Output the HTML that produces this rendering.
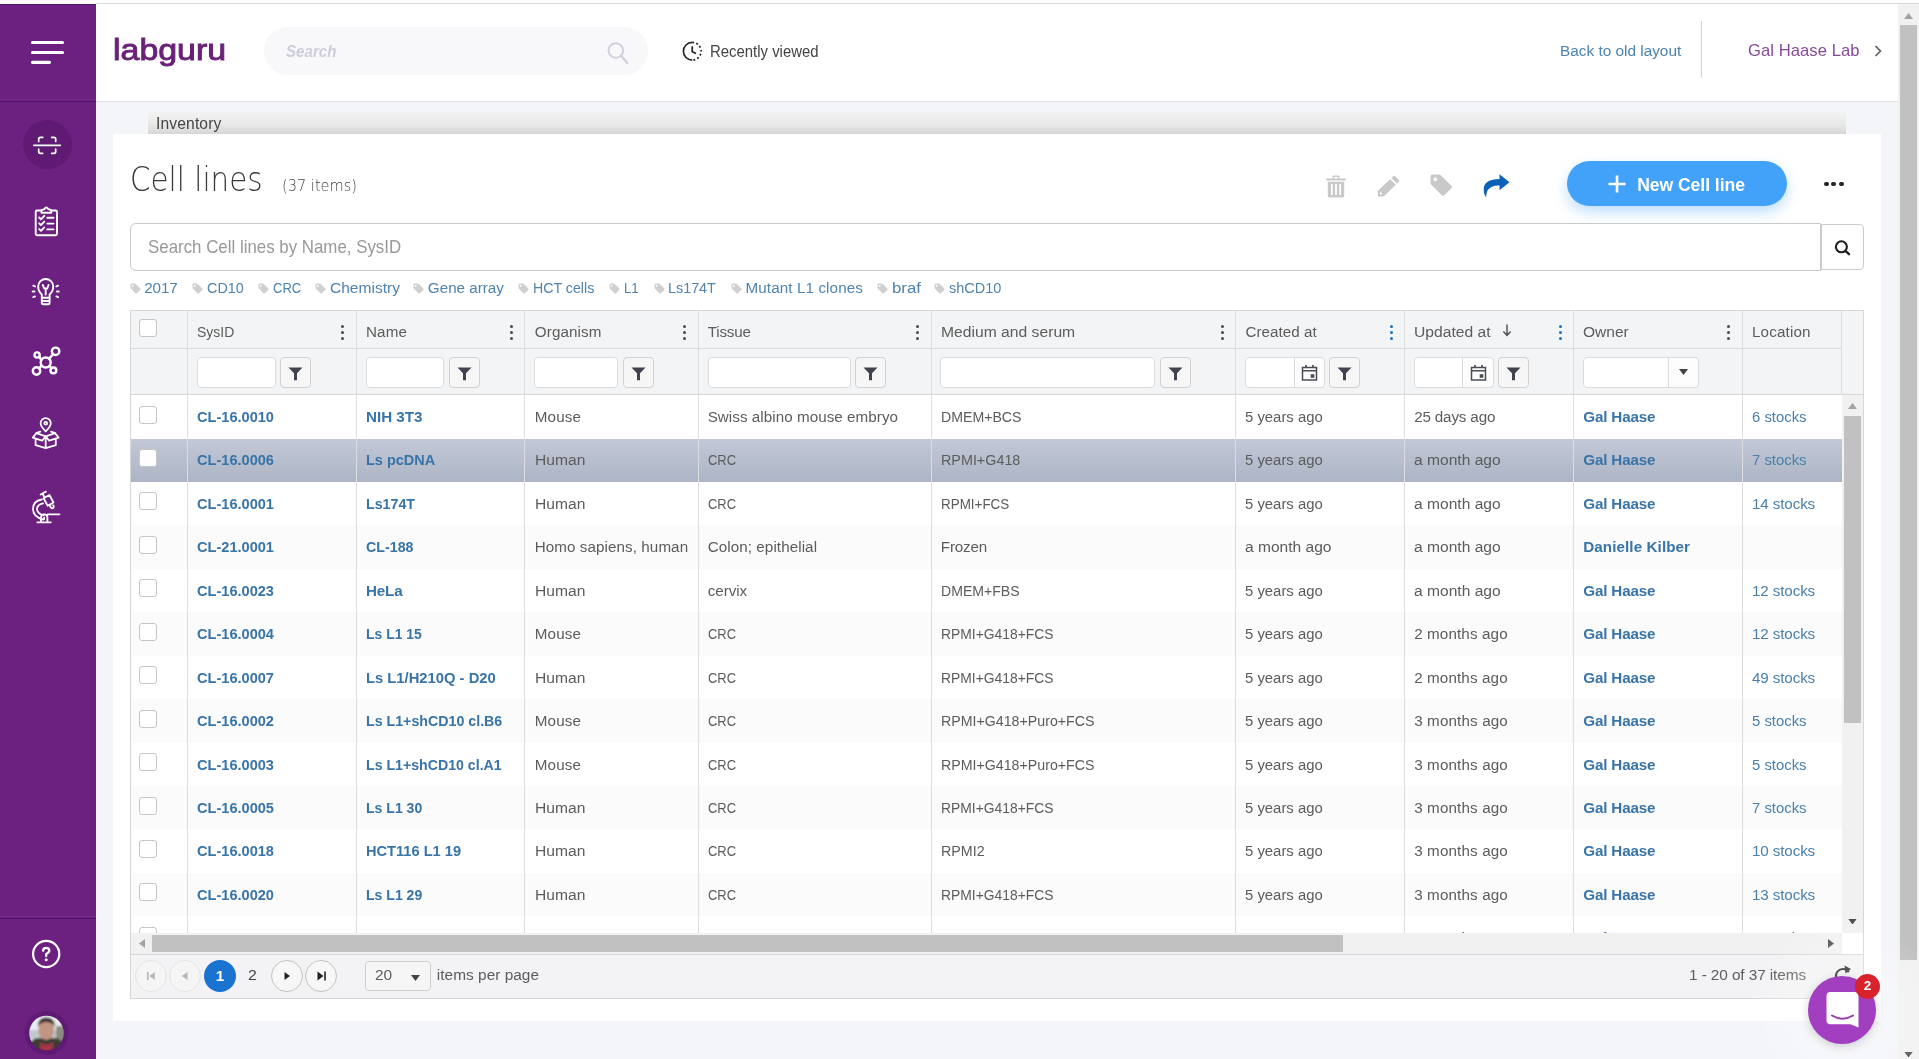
<!DOCTYPE html>
<html lang="en"><head><meta charset="utf-8"><title>Cell lines - Labguru</title>
<style>
*{box-sizing:border-box;margin:0;padding:0}
html,body{width:1919px;height:1059px;overflow:hidden}
body{position:relative;will-change:transform;background:#f4f5f9;font-family:"Liberation Sans","DejaVu Sans",sans-serif;font-size:15.2px;color:#555}
.abs{position:absolute}
.t{position:absolute;white-space:nowrap;transform-origin:0 50%;line-height:20px;font-size:15.2px;color:#5c5c5c}
.c44{color:#444}.c99{color:#999}.cw{color:#fff}.cblue{color:#4d83ad}.cpur{color:#87499a}
#topstrip{position:absolute;left:0;top:0;width:1919px;height:4px;background:linear-gradient(90deg,#fff 96px,#d8d8d8 96px) 0 3px/100% 1px no-repeat #fff}
#side{position:absolute;left:0;top:4px;width:96px;height:1055px;background:#6c2180;border-top:1px solid #571769}
#side .sep1{position:absolute;left:0;top:93px;width:96px;height:4px;background:linear-gradient(#6c2180 0,#722786 1.5px,#6a2080 3px,#501264 3px,#501264 4px)}
#side .sep2{position:absolute;left:0;top:910px;width:96px;height:4px;background:linear-gradient(#6c2180 0,#722786 1.5px,#6a2080 3px,#501264 3px,#501264 4px)}
#hdr{position:absolute;left:96px;top:4px;width:1802px;height:98px;background:#fff;border-bottom:1px solid #e1e2e6}
.logo{color:#6a2179;-webkit-text-stroke:0.9px #6a2179}
#gsearch{position:absolute;left:168px;top:22.500px;width:384px;height:48.500px;border-radius:25px;background:#f8f8fb}
.gs{color:#cdced9}
#hdiv{position:absolute;left:1605px;top:17px;width:1px;height:57px;background:#d4d4d4}
#pscroll{position:absolute;left:1898px;top:4px;width:21px;height:1055px;background:#f1f1f1}
#pscroll .th{position:absolute;left:2px;top:21px;width:17px;height:935px;background:#c1c1c1}
#crumb{position:absolute;left:148px;top:112px;width:1698px;height:22px;background:linear-gradient(#f3f3f3,#e9e9e9 55%,#d6d6d6);}
#card{position:absolute;left:113px;top:134px;width:1768px;height:887px;background:#fff}
.ttl{color:#3a3a3a;font-family:"DejaVu Sans","Liberation Sans",sans-serif}.cnt{color:#444;font-family:"DejaVu Sans","Liberation Sans",sans-serif}
#newbtn{position:absolute;left:1567px;top:161px;width:220px;height:45px;border-radius:23px;background:#42a1f8;box-shadow:0 6px 14px rgba(66,161,248,.35)}
#dots{position:absolute;left:1824px;top:181.800px;white-space:nowrap;font-size:0}
#dots i{display:inline-block;width:4.600px;height:4.600px;border-radius:50%;background:#222;margin-right:2.900px;vertical-align:top}
#sin{position:absolute;left:130px;top:223px;width:1691px;height:48px;border:1px solid #c9c9c9;border-radius:6px 0 0 6px;background:#fff}
#sbtn{position:absolute;left:1821px;top:224px;width:43px;height:46px;border:1px solid #ccc;border-radius:0 4px 4px 0;background:#fff}
#tags{position:absolute;left:130px;top:277px;height:22px;color:#3c78a8}
#tags .t{color:#5083ad}
#tags svg{position:absolute;top:6px}
#grid{position:absolute;left:130px;top:310px;width:1734px;height:689px;border:1px solid #d7d7d7;background:#fff;overflow:hidden}
#ghead{position:absolute;left:0;top:0;width:1732px;height:84px;background:#f3f4f6;border-bottom:1px solid #d7d7d7}
#ghead .hline{position:absolute;left:0;top:37px;width:1710px;height:1px;background:#dbdbdb}
#ghead .cb{top:8px}
.hc{position:absolute;left:0;top:0;height:37px}
.sortarr{position:absolute;top:13px}
.kmenu{position:absolute;top:14.300px;width:4px}
.kmenu i{display:block;width:3px;height:3px;border-radius:50%;margin-bottom:2.9px}
.vsep{position:absolute;width:1px;background:#dddddd}
.fin{position:absolute;top:46px;height:30.500px;border:1px solid #dcdcdc;border-radius:4px;background:#fff}
.fsplit{position:absolute;top:-1px;height:30.500px;border:1px solid #dcdcdc;border-radius:0 4px 4px 0;background:#fdfdfd;display:flex;align-items:center;justify-content:center}
.fbtn{position:absolute;top:46px;height:30.500px;padding-top:1.500px;border:1px solid #d2d2d2;border-radius:4px;background:#f6f6f6;display:flex;align-items:center;justify-content:center}
#gbody{position:absolute;left:0;top:84px;width:1711px;height:538px;overflow:hidden;background:#fff}
.row{position:absolute;left:0;width:1711px;height:43.450px;background:#fff}
.row.alt{background:#fbfbfb}
.row.sel{background:linear-gradient(#fff 0.8px,#c2c8d6 0.8px,#adb4c5 100%)}
.c.lk{color:#3874a8}
.c.lk2{color:#4a80ab}
.cb{position:absolute;left:8px;top:10.500px;width:18px;height:18px;border:1px solid #c6c6c6;border-radius:3px;background:#fff}
#vscroll{position:absolute;left:1711px;top:84px;width:21px;height:538px;background:#f1f1f1}
#vscroll .th{position:absolute;left:2px;top:21px;width:17px;height:307px;background:#c1c1c1}
#hscroll{position:absolute;left:0;top:622px;width:1711px;height:21px;background:#f1f1f1}
#hscroll .th{position:absolute;left:21px;top:2px;width:1191px;height:17px;background:#c1c1c1}
#corner{position:absolute;left:1711px;top:622px;width:21px;height:21px;background:#fff}
#pager{position:absolute;left:0;top:643px;width:1732px;height:44px;background:#f3f3f5;border-top:1px solid #d7d7d7}
.pb{position:absolute;top:5px;width:32px;height:32px;border-radius:50%;border:1px solid #e4e4e4;background:#f5f5f5}
.pb.on{border-color:#c4c4c4;background:#f7f7f7}
.pb svg{position:absolute;left:0;top:0}
#p1{position:absolute;left:73px;top:5px;width:32px;height:32px;border-radius:50%;background:#1a73d0;color:#fff;font-weight:bold;text-align:center;line-height:32px;font-size:15.400px}
#psel{position:absolute;left:234px;top:5.500px;width:66px;height:30.500px;border:1px solid #d0d0d0;border-radius:4px;background:#f6f6f6}
#psel svg{position:absolute;left:44.500px;top:13px}
#chat{position:absolute;left:1808px;top:976px;width:68px;height:68px;border-radius:50%;background:#a23fc0;box-shadow:0 2px 10px rgba(0,0,0,.18)}
#badge{position:absolute;left:1855px;top:974px;width:25px;height:25px;border-radius:50%;background:#d9232b;color:#fff;font-size:13.5px;font-weight:bold;line-height:24.5px;text-align:center}
#halo{position:absolute;left:1740px;top:910px;width:179px;height:149px;background:radial-gradient(ellipse 100px 95px at 105px 105px,rgba(255,255,255,.3) 0%,rgba(255,255,255,.22) 55%,rgba(255,255,255,0) 100%);pointer-events:none}

</style></head>
<body>
<div id="topstrip"></div>
<div id="side"><div class="sep1"></div><div class="sep2"></div></div>
<svg class="abs" style="left:0;top:0" width="96" height="1059" viewBox="0 0 96 1059">
<g stroke="#fff" stroke-width="3.200" stroke-linecap="round"><path d="M32.500 42.500H62.500M32.500 52.500H62.500M32.500 62.300H49.500"/></g>
<circle cx="47.500" cy="144.500" r="24.500" fill="#5f1b73"/>
<g stroke="#fff" fill="none" stroke-linecap="round" stroke-linejoin="round" stroke-width="1.700">
<path d="M33.800 145.300H60.300"/>
<path d="M38.700 141.500V139.200Q38.700 137.400 40.500 137.400H42.700M51.700 137.400H53.900Q55.700 137.400 55.700 139.200V141.500M38.700 149.200V151.500Q38.700 153.300 40.500 153.300H42.700M51.700 153.300H53.900Q55.700 153.300 55.700 151.500V149.200"/>
</g>
<g stroke="#fff" fill="none" stroke-linecap="round" stroke-linejoin="round" stroke-width="1.900">
<path d="M41.500 210.500H37.200Q35.700 210.500 35.700 212V233.800Q35.700 235.300 37.200 235.300H55.500Q57 235.300 57 233.800V212Q57 210.500 55.500 210.500H51.200"/>
<path d="M41.500 212.800V210.200L44.300 209.200Q46.300 205.800 48.400 209.200L51.200 210.200V212.800Z"/>
<path d="M39.200 217.500L41 219.300L44.300 215.800M47.300 217.800H53.500M39.200 223.300L41 225.100L44.300 221.600M47.300 223.600H53.500M39.200 229.100L41 230.900L44.300 227.400M47.300 229.400H53.500"/>
</g>
<g stroke="#fff" fill="none" stroke-linecap="round" stroke-linejoin="round" stroke-width="1.900">
<path d="M41.800 297.500V294.500Q38.200 291.500 38.200 286.500A7.500 7.500 0 0 1 53.200 286.500Q53.200 291.500 49.600 294.500V297.500"/>
<path d="M41.800 297.800H49.600V303Q49.600 304.300 48.300 304.300H43.100Q41.800 304.300 41.800 303ZM41.800 301H49.600"/>
<path d="M42.800 285L44.200 288.500H47.200L48.600 285M45.700 288.800V294.500"/>
<path d="M33.300 285.700L35 286.400M32.600 291.500H34.500M33.300 297.100L35 296.400M58.100 285.700L56.400 286.400M58.800 291.500H56.900M58.100 297.100L56.400 296.400"/>
</g>
<g stroke="#fff" fill="none" stroke-linecap="round" stroke-linejoin="round" stroke-width="2.400">
<circle cx="45.700" cy="362.500" r="5"/><circle cx="55.600" cy="351.300" r="3.700"/><circle cx="37.100" cy="355" r="2.600"/><circle cx="36.500" cy="371" r="3.700"/><circle cx="53.400" cy="370.400" r="2.900"/>
<path d="M49 358.700L53.200 354.100M41.300 360.200L39.300 356.700M41.600 365.600L39.100 368.300M49.400 365.800L51.400 368.200"/>
</g>
<g stroke="#fff" fill="none" stroke-linecap="round" stroke-linejoin="round" stroke-width="1.800">
<path d="M45.700 431.300Q40.600 426.300 40.600 423.200A5.100 5.100 0 0 1 50.800 423.200Q50.800 426.300 45.700 431.300Z"/>
<circle cx="45.700" cy="423.200" r="1.400"/>
<path d="M36.300 433.200L45.700 436.300L55.100 433.200M36.300 433.200L32.800 437.600L42.200 440.700L45.700 436.300L49.200 440.700L58.600 437.600L55.100 433.200M45.700 436.300V448.200M35.600 438.700V445.200L45.700 448.200L55.800 445.200V438.700"/>
<path d="M36.300 433.200L40.300 431.600M55.100 433.200L51.100 431.600"/>
</g>
<g stroke="#fff" fill="none" stroke-linecap="round" stroke-linejoin="round" stroke-width="1.800">
<path d="M40.600 494.500L45.900 491.600M42.600 493.800L44.200 496.700"/>
<path d="M43.600 498.200L49.400 495L53.500 502.500L47.700 505.700Z"/>
<path d="M49.600 505.200L50.600 507A1.600 1.600 0 1 0 53 505.300"/>
<path d="M43.500 519.500Q33 517 33 509Q33 501 41.800 499.500M43.500 515.200Q37 513.500 37 509Q37 504.800 43 503.300"/>
<path d="M37.300 522.300H50.800M41 522V517.600A3.200 3.200 0 0 1 47.400 517.600V522M47.800 514.300H59.500M44.200 517.500V519"/>
</g>
<circle cx="46.200" cy="954" r="13.100" stroke="#fff" fill="none" stroke-linecap="round" stroke-linejoin="round" stroke-width="2.200"/>
<path d="M43.100 950.800Q43.100 947.800 46.200 947.800Q49.300 947.800 49.300 950.600Q49.300 952.500 46.200 954V956" stroke="#fff" fill="none" stroke-linecap="round" stroke-linejoin="round" stroke-width="2.300"/>
<circle cx="46.200" cy="959.800" r="1.500" fill="#fff"/>
<circle cx="46.500" cy="1033" r="22" fill="#5f1b73"/>
<defs><clipPath id="avc"><circle cx="46.500" cy="1033" r="17.300"/></clipPath><filter id="avb" x="-20%" y="-20%" width="140%" height="140%"><feGaussianBlur stdDeviation="0.900"/></filter></defs>
<g clip-path="url(#avc)"><g filter="url(#avb)">
<rect x="26" y="1012" width="42" height="42" fill="#e9edf1"/>
<rect x="26" y="1030" width="42" height="9" fill="#c3c8cc"/>
<rect x="56" y="1026" width="12" height="16" fill="#8e8a80"/>
<path d="M27 1054Q28 1039 38 1038L55 1038Q65 1039 66 1054Z" fill="#3a3c33"/>
<path d="M39.500 1042Q46.500 1047 53.500 1042L52 1053H41Z" fill="#a63546"/>
<ellipse cx="46.300" cy="1030" rx="8" ry="10" fill="#c29583"/>
<path d="M37.800 1027Q37.300 1017.500 46.300 1017.500Q55.300 1017.500 54.800 1027Q52 1022 46.300 1022Q40.600 1022 37.800 1027Z" fill="#3b2e29"/>
</g></g>
</svg>
<div id="hdr">
  <span class="t logo" style="left:16.57px;top:35.74px;font-size:29.6px;transform:scaleX(1.1453);">labguru</span>
  <div id="gsearch"><span class="t gs" style="left:21.99px;top:14.48px;font-size:16.5px;font-weight:bold;font-style:italic;transform:scaleX(0.9179);">Search</span>
    <svg class="abs" style="left:340px;top:12px" width="26" height="26" viewBox="0 0 26 26"><circle cx="11.8" cy="11.5" r="7.3" fill="none" stroke="#cfd0dc" stroke-width="2"/><path d="M17.2 17L23.3 24" stroke="#cfd0dc" stroke-width="2.2" stroke-linecap="round"/></svg>
  </div>
  <svg class="abs" style="left:586.2px;top:36.8px" width="20.5" height="20.5" viewBox="0 0 22 22"><path d="M11 1.5A9.5 9.5 0 1 0 11 20.500" fill="none" stroke="#222" stroke-width="1.8"/><path d="M11 1.5A9.500 9.500 0 0 1 11 20.500" fill="none" stroke="#222" stroke-width="1.8" stroke-dasharray="2 2.4"/><path d="M11 5.500V11.500L15 13.500" fill="none" stroke="#222" stroke-width="1.8"/></svg>
  <span class="t c44" style="left:614.24px;top:37.59px;font-size:15.6px;transform:scaleX(0.9563);">Recently viewed</span>
  <span class="t cblue" style="left:1464.05px;top:36.96px;font-size:15.4px;letter-spacing:-0.019px;">Back to old layout</span>
  <div id="hdiv"></div>
  <span class="t cpur" style="left:1651.99px;top:36.55px;font-size:16.6px;letter-spacing:0.069px;">Gal Haase Lab</span>
  <svg class="abs" style="left:1778px;top:41px" width="8" height="12" viewBox="0 0 8 12"><path d="M1.500 1L6.500 6L1.500 11" fill="none" stroke="#555" stroke-width="1.500"/></svg>
</div>
<div id="pscroll"><div class="th"></div>
  <svg class="abs" style="left:6px;top:9px" width="9" height="6" viewBox="0 0 9 6"><path d="M0 6h9L4.500 0z" fill="#a3a3a3"/></svg>
  <svg class="abs" style="left:6px;top:1047.500px" width="9" height="5.500" viewBox="0 0 9 6"><path d="M0 0h9L4.500 6z" fill="#505050"/></svg>
</div>
<div id="crumb"><span class="t c44" style="left:8.04px;top:2.09px;font-size:15.6px;letter-spacing:0.140px;">Inventory</span></div>
<div id="card"></div>
<span class="t ttl" style="left:129.60px;top:170.03px;font-size:32.8px;font-weight:200;transform:scaleX(0.8954);">Cell lines</span>
<span class="t cnt" style="left:282.21px;top:175.89px;font-size:16.2px;font-weight:200;transform:scaleX(0.8995);">(37 items)</span>
<svg class="abs" style="left:1326px;top:174.500px" width="20" height="23" viewBox="0 0 20 23"><path fill="#c9c9c9" d="M6.500 1.500Q6.500 0.500 7.500 0.500H12.500Q13.500 0.500 13.500 1.500V3.500H19Q19.800 3.500 19.800 4.300V5.500H0.200V4.300Q0.200 3.500 1 3.500H6.500ZM8 3.500H12V2H8ZM1.800 6.800H18.200V20.500Q18.200 22.500 16.200 22.500H3.800Q1.800 22.500 1.800 20.500ZM5 9V20H6.700V9ZM9.100 9V20H10.900V9ZM13.300 9V20H15V9Z" fill-rule="evenodd"/></svg>
<svg class="abs" style="left:1377px;top:175px" width="23" height="22" viewBox="0 0 23 22"><path fill="#c9c9c9" d="M16.200 1.200Q17.200 0.200 18.200 1.200L21.800 4.800Q22.800 5.800 21.800 6.800L20 8.600L14.400 3ZM13.200 4.200L18.800 9.800L6.800 21.500H0.800V15.800ZM3 16.500V19.300H5.800Z" fill-rule="evenodd"/></svg>
<svg class="abs" style="left:1430px;top:174px" width="23" height="23" viewBox="0 0 23 23"><path fill="#c9c9c9" d="M0.500 2.200Q0.500 0.500 2.200 0.500H9Q10 0.500 10.800 1.300L21.600 12.100Q22.600 13.100 21.600 14.100L14.100 21.600Q13.100 22.600 12.100 21.600L1.300 10.800Q0.500 10 0.500 9ZM5.300 3.500A1.900 1.900 0 1 0 5.310 3.500Z" fill-rule="evenodd"/></svg>
<svg class="abs" style="left:1483px;top:174px" width="27" height="24" viewBox="0 0 27 24"><path fill="#0d62b8" d="M16.500 0.300L26.500 8.200L16.500 16.200V11.500Q8.500 11 4.500 16.500Q3.200 18.800 3 23.500Q-0.500 17.500 1.200 12Q3.600 5 16.500 5Z"/></svg>
<div id="newbtn">
  <svg class="abs" style="left:41px;top:14px" width="18" height="18" viewBox="0 0 18 18"><path d="M9 0.500V17.500M0.500 9H17.500" stroke="#fff" stroke-width="2.600"/></svg>
  <span class="t cw" style="left:70.13px;top:13.80px;font-size:17.6px;font-weight:bold;letter-spacing:-0.054px;">New Cell line</span></div>
<div id="dots"><i></i><i></i><i></i></div>
<div id="sin"><span class="t c99" style="left:16.62px;top:13.13px;font-size:17.8px;transform:scaleX(0.9489);">Search Cell lines by Name, SysID</span></div>
<div id="sbtn"><svg class="abs" style="left:0;top:0" width="41" height="44" viewBox="0 0 41 44"><circle cx="19.400" cy="21.800" r="5.500" fill="none" stroke="#1c1c1c" stroke-width="2.100"/><path d="M23.400 25.800L27 29.200" stroke="#1c1c1c" stroke-width="2.300" stroke-linecap="round"/></svg></div>
<div id="tags"><svg style="left:-0.4px" width="11" height="11" viewBox="0 0 11 11"><path d="M0.500 1.800Q0.500 0.500 1.800 0.500H4.600Q5.300 0.500 5.800 1L10.300 5.500Q11 6.200 10.300 6.900L6.900 10.300Q6.200 11 5.500 10.300L1 5.800Q0.500 5.300 0.500 4.600ZM2.700 1.900A0.900 0.900 0 1 0 2.710 1.900Z" fill="#d0d0d0" fill-rule="evenodd"/></svg><span class="t" style="left:14.26px;top:0.83px;letter-spacing:-0.079px;">2017</span><svg style="left:61.5px" width="11" height="11" viewBox="0 0 11 11"><path d="M0.500 1.800Q0.500 0.500 1.800 0.500H4.600Q5.300 0.500 5.800 1L10.300 5.500Q11 6.200 10.300 6.900L6.900 10.300Q6.200 11 5.500 10.300L1 5.800Q0.500 5.300 0.500 4.600ZM2.700 1.900A0.900 0.900 0 1 0 2.710 1.900Z" fill="#d0d0d0" fill-rule="evenodd"/></svg><span class="t" style="left:77.26px;top:0.83px;transform:scaleX(0.9464);">CD10</span><svg style="left:128.0px" width="11" height="11" viewBox="0 0 11 11"><path d="M0.500 1.800Q0.500 0.500 1.800 0.500H4.600Q5.300 0.500 5.800 1L10.300 5.500Q11 6.200 10.300 6.900L6.900 10.300Q6.200 11 5.500 10.300L1 5.800Q0.500 5.300 0.500 4.600ZM2.700 1.900A0.900 0.900 0 1 0 2.710 1.900Z" fill="#d0d0d0" fill-rule="evenodd"/></svg><span class="t" style="left:142.66px;top:0.83px;transform:scaleX(0.8588);">CRC</span><svg style="left:184.9px" width="11" height="11" viewBox="0 0 11 11"><path d="M0.500 1.800Q0.500 0.500 1.800 0.500H4.600Q5.300 0.500 5.800 1L10.300 5.500Q11 6.200 10.300 6.900L6.900 10.300Q6.200 11 5.500 10.300L1 5.800Q0.500 5.300 0.500 4.600ZM2.700 1.900A0.900 0.900 0 1 0 2.710 1.900Z" fill="#d0d0d0" fill-rule="evenodd"/></svg><span class="t" style="left:199.56px;top:0.83px;transform:scaleX(1.0234);">Chemistry</span><svg style="left:282.8px" width="11" height="11" viewBox="0 0 11 11"><path d="M0.500 1.800Q0.500 0.500 1.800 0.500H4.600Q5.300 0.500 5.800 1L10.300 5.500Q11 6.200 10.300 6.900L6.900 10.300Q6.200 11 5.500 10.300L1 5.800Q0.500 5.300 0.500 4.600ZM2.700 1.900A0.900 0.900 0 1 0 2.710 1.900Z" fill="#d0d0d0" fill-rule="evenodd"/></svg><span class="t" style="left:297.86px;top:0.83px;letter-spacing:0.008px;">Gene array</span><svg style="left:387.6px" width="11" height="11" viewBox="0 0 11 11"><path d="M0.500 1.800Q0.500 0.500 1.800 0.500H4.600Q5.300 0.500 5.800 1L10.300 5.500Q11 6.200 10.300 6.900L6.900 10.300Q6.200 11 5.500 10.300L1 5.800Q0.500 5.300 0.500 4.600ZM2.700 1.900A0.900 0.900 0 1 0 2.710 1.900Z" fill="#d0d0d0" fill-rule="evenodd"/></svg><span class="t" style="left:402.96px;top:0.83px;transform:scaleX(0.9346);">HCT cells</span><svg style="left:478.6px" width="11" height="11" viewBox="0 0 11 11"><path d="M0.500 1.800Q0.500 0.500 1.800 0.500H4.600Q5.300 0.500 5.800 1L10.300 5.500Q11 6.200 10.300 6.900L6.900 10.300Q6.200 11 5.500 10.300L1 5.800Q0.500 5.300 0.500 4.600ZM2.700 1.900A0.900 0.900 0 1 0 2.710 1.900Z" fill="#d0d0d0" fill-rule="evenodd"/></svg><span class="t" style="left:493.66px;top:0.83px;transform:scaleX(0.8730);">L1</span><svg style="left:524.0px" width="11" height="11" viewBox="0 0 11 11"><path d="M0.500 1.800Q0.500 0.500 1.800 0.500H4.600Q5.300 0.500 5.800 1L10.300 5.500Q11 6.200 10.300 6.900L6.900 10.300Q6.200 11 5.500 10.300L1 5.800Q0.500 5.300 0.500 4.600ZM2.700 1.900A0.900 0.900 0 1 0 2.710 1.900Z" fill="#d0d0d0" fill-rule="evenodd"/></svg><span class="t" style="left:538.36px;top:0.83px;transform:scaleX(0.9445);">Ls174T</span><svg style="left:600.6px" width="11" height="11" viewBox="0 0 11 11"><path d="M0.500 1.800Q0.500 0.500 1.800 0.500H4.600Q5.300 0.500 5.800 1L10.300 5.500Q11 6.200 10.300 6.900L6.900 10.300Q6.200 11 5.500 10.300L1 5.800Q0.500 5.300 0.500 4.600ZM2.700 1.900A0.900 0.900 0 1 0 2.710 1.900Z" fill="#d0d0d0" fill-rule="evenodd"/></svg><span class="t" style="left:615.46px;top:0.83px;letter-spacing:0.119px;">Mutant L1 clones</span><svg style="left:746.9px" width="11" height="11" viewBox="0 0 11 11"><path d="M0.500 1.800Q0.500 0.500 1.800 0.500H4.600Q5.300 0.500 5.800 1L10.300 5.500Q11 6.200 10.300 6.900L6.900 10.300Q6.200 11 5.500 10.300L1 5.800Q0.500 5.300 0.500 4.600ZM2.700 1.900A0.900 0.900 0 1 0 2.710 1.900Z" fill="#d0d0d0" fill-rule="evenodd"/></svg><span class="t" style="left:761.56px;top:0.83px;transform:scaleX(1.1065);">braf</span><svg style="left:804.2px" width="11" height="11" viewBox="0 0 11 11"><path d="M0.500 1.800Q0.500 0.500 1.800 0.500H4.600Q5.300 0.500 5.800 1L10.300 5.500Q11 6.200 10.300 6.900L6.900 10.300Q6.200 11 5.500 10.300L1 5.800Q0.500 5.300 0.500 4.600ZM2.700 1.900A0.900 0.900 0 1 0 2.710 1.900Z" fill="#d0d0d0" fill-rule="evenodd"/></svg><span class="t" style="left:818.86px;top:0.83px;transform:scaleX(0.9542);">shCD10</span></div>
<div id="grid">
  <div id="ghead"><div class="hline"></div>
    <span class="cb"></span>
<div class="hc"><span class="t ht" style="left:65.96px;top:10.83px;transform:scaleX(0.9221);">SysID</span>
<span class="kmenu" style="left:210.2px"><i style="background:#4a4a4a"></i><i style="background:#4a4a4a"></i><i style="background:#4a4a4a"></i></span>
</div>
<div class="hc"><span class="t ht" style="left:234.96px;top:10.83px;letter-spacing:0.148px;">Name</span>
<span class="kmenu" style="left:378.9px"><i style="background:#4a4a4a"></i><i style="background:#4a4a4a"></i><i style="background:#4a4a4a"></i></span>
</div>
<div class="hc"><span class="t ht" style="left:403.76px;top:10.83px;letter-spacing:0.131px;">Organism</span>
<span class="kmenu" style="left:552.4px"><i style="background:#4a4a4a"></i><i style="background:#4a4a4a"></i><i style="background:#4a4a4a"></i></span>
</div>
<div class="hc"><span class="t ht" style="left:576.66px;top:10.83px;letter-spacing:-0.162px;">Tissue</span>
<span class="kmenu" style="left:784.9px"><i style="background:#4a4a4a"></i><i style="background:#4a4a4a"></i><i style="background:#4a4a4a"></i></span>
</div>
<div class="hc"><span class="t ht" style="left:809.86px;top:10.83px;transform:scaleX(1.0320);">Medium and serum</span>
<span class="kmenu" style="left:1090.4px"><i style="background:#4a4a4a"></i><i style="background:#4a4a4a"></i><i style="background:#4a4a4a"></i></span>
</div>
<div class="hc"><span class="t ht" style="left:1114.46px;top:10.83px;letter-spacing:0.038px;">Created at</span>
<span class="kmenu" style="left:1259.2px"><i style="background:#1a6fc4"></i><i style="background:#1a6fc4"></i><i style="background:#1a6fc4"></i></span>
</div>
<div class="hc"><span class="t ht" style="left:1283.16px;top:10.83px;transform:scaleX(1.0316);">Updated at</span>
<svg class="sortarr" style="left:1370.5px" width="10" height="13" viewBox="0 0 10 13"><path d="M5 0.500V11 M1.400 7.500L5 11.300L8.600 7.500" fill="none" stroke="#555" stroke-width="1.500"/></svg>
<span class="kmenu" style="left:1427.6px"><i style="background:#1a6fc4"></i><i style="background:#1a6fc4"></i><i style="background:#1a6fc4"></i></span>
</div>
<div class="hc"><span class="t ht" style="left:1452.26px;top:10.83px;transform:scaleX(1.0229);">Owner</span>
<span class="kmenu" style="left:1596.4px"><i style="background:#4a4a4a"></i><i style="background:#4a4a4a"></i><i style="background:#4a4a4a"></i></span>
</div>
<div class="hc"><span class="t ht" style="left:1620.96px;top:10.83px;letter-spacing:0.163px;">Location</span>
</div>
<div class="vsep" style="left:56px;top:0;height:83px"></div>
<div class="vsep" style="left:225px;top:0;height:83px"></div>
<div class="vsep" style="left:393px;top:0;height:83px"></div>
<div class="vsep" style="left:567px;top:0;height:83px"></div>
<div class="vsep" style="left:800px;top:0;height:83px"></div>
<div class="vsep" style="left:1104px;top:0;height:83px"></div>
<div class="vsep" style="left:1273px;top:0;height:83px"></div>
<div class="vsep" style="left:1442px;top:0;height:83px"></div>
<div class="vsep" style="left:1611px;top:0;height:83px"></div>
<div class="vsep" style="left:1710px;top:0;height:83px"></div>
<div class="fin" style="left:66px;width:79px"></div><div class="fbtn" style="left:149px;width:31px"><svg width="15" height="15" viewBox="0 0 15 15"><path d="M0.500 1.500h14L9 7.300V14.200H6V7.300z" fill="#40434e"/></svg></div>
<div class="fin" style="left:235px;width:78px"></div><div class="fbtn" style="left:318px;width:31px"><svg width="15" height="15" viewBox="0 0 15 15"><path d="M0.500 1.500h14L9 7.300V14.200H6V7.300z" fill="#40434e"/></svg></div>
<div class="fin" style="left:403px;width:84px"></div><div class="fbtn" style="left:492px;width:31px"><svg width="15" height="15" viewBox="0 0 15 15"><path d="M0.500 1.500h14L9 7.300V14.200H6V7.300z" fill="#40434e"/></svg></div>
<div class="fin" style="left:577px;width:143px"></div><div class="fbtn" style="left:724px;width:31px"><svg width="15" height="15" viewBox="0 0 15 15"><path d="M0.500 1.500h14L9 7.300V14.200H6V7.300z" fill="#40434e"/></svg></div>
<div class="fin" style="left:809px;width:215px"></div><div class="fbtn" style="left:1029px;width:31px"><svg width="15" height="15" viewBox="0 0 15 15"><path d="M0.500 1.500h14L9 7.300V14.200H6V7.300z" fill="#40434e"/></svg></div>
<div class="fin" style="left:1114px;width:80px"><div class="fsplit" style="left:48px;width:31px"><svg width="17" height="17" viewBox="0 0 17 17"><path d="M1.500 3.500h14v12.500h-14z M1.500 6.700h14" fill="none" stroke="#4a4d55" stroke-width="1.500"/><path d="M5 1v3M12 1v3" stroke="#4a4d55" stroke-width="1.700"/><rect x="9.700" y="10.200" width="3.600" height="3.600" fill="#4a4d55"/></svg></div></div><div class="fbtn" style="left:1198px;width:31px"><svg width="15" height="15" viewBox="0 0 15 15"><path d="M0.500 1.500h14L9 7.300V14.200H6V7.300z" fill="#40434e"/></svg></div>
<div class="fin" style="left:1283px;width:80px"><div class="fsplit" style="left:47px;width:32px"><svg width="17" height="17" viewBox="0 0 17 17"><path d="M1.500 3.500h14v12.500h-14z M1.500 6.700h14" fill="none" stroke="#4a4d55" stroke-width="1.500"/><path d="M5 1v3M12 1v3" stroke="#4a4d55" stroke-width="1.700"/><rect x="9.700" y="10.200" width="3.600" height="3.600" fill="#4a4d55"/></svg></div></div><div class="fbtn" style="left:1367px;width:31px"><svg width="15" height="15" viewBox="0 0 15 15"><path d="M0.500 1.500h14L9 7.300V14.200H6V7.300z" fill="#40434e"/></svg></div>
<div class="fin" style="left:1452px;width:116px"><div class="fsplit" style="left:84px;width:31px"><svg width="9" height="6" viewBox="0 0 9 6"><path d="M0 0h9L4.5 6z" fill="#444"/></svg></div></div>
  </div>
  <div id="gbody">
<div class="row" style="top:0.00px"><span class="cb"></span><span class="t c lk" style="left:65.96px;top:11.93px;font-weight:bold;transform:scaleX(0.9596);">CL-16.0010</span><span class="t c lk" style="left:234.96px;top:11.93px;font-weight:bold;letter-spacing:0.002px;">NIH 3T3</span><span class="t c" style="left:403.76px;top:11.93px;letter-spacing:0.167px;">Mouse</span><span class="t c" style="left:576.66px;top:11.93px;letter-spacing:0.053px;">Swiss albino mouse embryo</span><span class="t c" style="left:809.86px;top:11.93px;transform:scaleX(0.9302);">DMEM+BCS</span><span class="t c" style="left:1114.46px;top:11.93px;transform:scaleX(0.9797);">5 years ago</span><span class="t c" style="left:1283.16px;top:11.93px;letter-spacing:-0.151px;">25 days ago</span><span class="t c lk" style="left:1452.26px;top:11.93px;font-weight:bold;letter-spacing:-0.151px;">Gal Haase</span><span class="t c lk2" style="left:1620.96px;top:11.93px;transform:scaleX(0.9792);">6 stocks</span></div>
<div class="row sel" style="top:43.45px"><span class="cb"></span><span class="t c lk" style="left:65.96px;top:11.93px;font-weight:bold;transform:scaleX(0.9596);">CL-16.0006</span><span class="t c lk" style="left:234.96px;top:11.93px;font-weight:bold;transform:scaleX(0.9543);">Ls pcDNA</span><span class="t c" style="left:403.76px;top:11.93px;transform:scaleX(1.0284);">Human</span><span class="t c" style="left:576.66px;top:11.93px;transform:scaleX(0.8527);">CRC</span><span class="t c" style="left:809.86px;top:11.93px;transform:scaleX(0.9448);">RPMI+G418</span><span class="t c" style="left:1114.46px;top:11.93px;transform:scaleX(0.9797);">5 years ago</span><span class="t c" style="left:1283.16px;top:11.93px;transform:scaleX(1.0263);">a month ago</span><span class="t c lk" style="left:1452.26px;top:11.93px;font-weight:bold;letter-spacing:-0.151px;">Gal Haase</span><span class="t c lk2" style="left:1620.96px;top:11.93px;transform:scaleX(0.9792);">7 stocks</span></div>
<div class="row" style="top:86.90px"><span class="cb"></span><span class="t c lk" style="left:65.96px;top:11.93px;font-weight:bold;transform:scaleX(0.9596);">CL-16.0001</span><span class="t c lk" style="left:234.96px;top:11.93px;font-weight:bold;transform:scaleX(0.9354);">Ls174T</span><span class="t c" style="left:403.76px;top:11.93px;transform:scaleX(1.0284);">Human</span><span class="t c" style="left:576.66px;top:11.93px;transform:scaleX(0.8527);">CRC</span><span class="t c" style="left:809.86px;top:11.93px;transform:scaleX(0.8840);">RPMI+FCS</span><span class="t c" style="left:1114.46px;top:11.93px;transform:scaleX(0.9797);">5 years ago</span><span class="t c" style="left:1283.16px;top:11.93px;transform:scaleX(1.0263);">a month ago</span><span class="t c lk" style="left:1452.26px;top:11.93px;font-weight:bold;letter-spacing:-0.151px;">Gal Haase</span><span class="t c lk2" style="left:1620.96px;top:11.93px;letter-spacing:-0.112px;">14 stocks</span></div>
<div class="row alt" style="top:130.35px"><span class="cb"></span><span class="t c lk" style="left:65.96px;top:11.93px;font-weight:bold;transform:scaleX(0.9596);">CL-21.0001</span><span class="t c lk" style="left:234.96px;top:11.93px;font-weight:bold;transform:scaleX(0.9389);">CL-188</span><span class="t c" style="left:403.76px;top:11.93px;letter-spacing:0.077px;">Homo sapiens, human</span><span class="t c" style="left:576.66px;top:11.93px;letter-spacing:0.080px;">Colon; epithelial</span><span class="t c" style="left:809.86px;top:11.93px;letter-spacing:-0.184px;">Frozen</span><span class="t c" style="left:1114.46px;top:11.93px;transform:scaleX(1.0240);">a month ago</span><span class="t c" style="left:1283.16px;top:11.93px;transform:scaleX(1.0263);">a month ago</span><span class="t c lk" style="left:1452.26px;top:11.93px;font-weight:bold;letter-spacing:0.089px;">Danielle Kilber</span></div>
<div class="row" style="top:173.80px"><span class="cb"></span><span class="t c lk" style="left:65.96px;top:11.93px;font-weight:bold;transform:scaleX(0.9596);">CL-16.0023</span><span class="t c lk" style="left:234.96px;top:11.93px;font-weight:bold;letter-spacing:-0.127px;">HeLa</span><span class="t c" style="left:403.76px;top:11.93px;transform:scaleX(1.0284);">Human</span><span class="t c" style="left:576.66px;top:11.93px;letter-spacing:-0.022px;">cervix</span><span class="t c" style="left:809.86px;top:11.93px;transform:scaleX(0.9263);">DMEM+FBS</span><span class="t c" style="left:1114.46px;top:11.93px;transform:scaleX(0.9797);">5 years ago</span><span class="t c" style="left:1283.16px;top:11.93px;transform:scaleX(1.0263);">a month ago</span><span class="t c lk" style="left:1452.26px;top:11.93px;font-weight:bold;letter-spacing:-0.151px;">Gal Haase</span><span class="t c lk2" style="left:1620.96px;top:11.93px;letter-spacing:-0.112px;">12 stocks</span></div>
<div class="row alt" style="top:217.25px"><span class="cb"></span><span class="t c lk" style="left:65.96px;top:11.93px;font-weight:bold;transform:scaleX(0.9596);">CL-16.0004</span><span class="t c lk" style="left:234.96px;top:11.93px;font-weight:bold;transform:scaleX(0.9174);">Ls L1 15</span><span class="t c" style="left:403.76px;top:11.93px;letter-spacing:0.167px;">Mouse</span><span class="t c" style="left:576.66px;top:11.93px;transform:scaleX(0.8527);">CRC</span><span class="t c" style="left:809.86px;top:11.93px;transform:scaleX(0.9125);">RPMI+G418+FCS</span><span class="t c" style="left:1114.46px;top:11.93px;transform:scaleX(0.9797);">5 years ago</span><span class="t c" style="left:1283.16px;top:11.93px;letter-spacing:0.130px;">2 months ago</span><span class="t c lk" style="left:1452.26px;top:11.93px;font-weight:bold;letter-spacing:-0.151px;">Gal Haase</span><span class="t c lk2" style="left:1620.96px;top:11.93px;letter-spacing:-0.112px;">12 stocks</span></div>
<div class="row" style="top:260.70px"><span class="cb"></span><span class="t c lk" style="left:65.96px;top:11.93px;font-weight:bold;transform:scaleX(0.9596);">CL-16.0007</span><span class="t c lk" style="left:234.96px;top:11.93px;font-weight:bold;transform:scaleX(0.9729);">Ls L1/H210Q - D20</span><span class="t c" style="left:403.76px;top:11.93px;transform:scaleX(1.0284);">Human</span><span class="t c" style="left:576.66px;top:11.93px;transform:scaleX(0.8527);">CRC</span><span class="t c" style="left:809.86px;top:11.93px;transform:scaleX(0.9125);">RPMI+G418+FCS</span><span class="t c" style="left:1114.46px;top:11.93px;transform:scaleX(0.9797);">5 years ago</span><span class="t c" style="left:1283.16px;top:11.93px;letter-spacing:0.130px;">2 months ago</span><span class="t c lk" style="left:1452.26px;top:11.93px;font-weight:bold;letter-spacing:-0.151px;">Gal Haase</span><span class="t c lk2" style="left:1620.96px;top:11.93px;letter-spacing:-0.112px;">49 stocks</span></div>
<div class="row alt" style="top:304.15px"><span class="cb"></span><span class="t c lk" style="left:65.96px;top:11.93px;font-weight:bold;transform:scaleX(0.9596);">CL-16.0002</span><span class="t c lk" style="left:234.96px;top:11.93px;font-weight:bold;transform:scaleX(0.9358);">Ls L1+shCD10 cl.B6</span><span class="t c" style="left:403.76px;top:11.93px;letter-spacing:0.167px;">Mouse</span><span class="t c" style="left:576.66px;top:11.93px;transform:scaleX(0.8527);">CRC</span><span class="t c" style="left:809.86px;top:11.93px;transform:scaleX(0.9347);">RPMI+G418+Puro+FCS</span><span class="t c" style="left:1114.46px;top:11.93px;transform:scaleX(0.9797);">5 years ago</span><span class="t c" style="left:1283.16px;top:11.93px;letter-spacing:0.148px;">3 months ago</span><span class="t c lk" style="left:1452.26px;top:11.93px;font-weight:bold;letter-spacing:-0.151px;">Gal Haase</span><span class="t c lk2" style="left:1620.96px;top:11.93px;transform:scaleX(0.9792);">5 stocks</span></div>
<div class="row" style="top:347.60px"><span class="cb"></span><span class="t c lk" style="left:65.96px;top:11.93px;font-weight:bold;transform:scaleX(0.9596);">CL-16.0003</span><span class="t c lk" style="left:234.96px;top:11.93px;font-weight:bold;transform:scaleX(0.9317);">Ls L1+shCD10 cl.A1</span><span class="t c" style="left:403.76px;top:11.93px;letter-spacing:0.167px;">Mouse</span><span class="t c" style="left:576.66px;top:11.93px;transform:scaleX(0.8527);">CRC</span><span class="t c" style="left:809.86px;top:11.93px;transform:scaleX(0.9347);">RPMI+G418+Puro+FCS</span><span class="t c" style="left:1114.46px;top:11.93px;transform:scaleX(0.9797);">5 years ago</span><span class="t c" style="left:1283.16px;top:11.93px;letter-spacing:0.148px;">3 months ago</span><span class="t c lk" style="left:1452.26px;top:11.93px;font-weight:bold;letter-spacing:-0.151px;">Gal Haase</span><span class="t c lk2" style="left:1620.96px;top:11.93px;transform:scaleX(0.9792);">5 stocks</span></div>
<div class="row alt" style="top:391.05px"><span class="cb"></span><span class="t c lk" style="left:65.96px;top:11.93px;font-weight:bold;transform:scaleX(0.9596);">CL-16.0005</span><span class="t c lk" style="left:234.96px;top:11.93px;font-weight:bold;transform:scaleX(0.9256);">Ls L1 30</span><span class="t c" style="left:403.76px;top:11.93px;transform:scaleX(1.0284);">Human</span><span class="t c" style="left:576.66px;top:11.93px;transform:scaleX(0.8527);">CRC</span><span class="t c" style="left:809.86px;top:11.93px;transform:scaleX(0.9125);">RPMI+G418+FCS</span><span class="t c" style="left:1114.46px;top:11.93px;transform:scaleX(0.9797);">5 years ago</span><span class="t c" style="left:1283.16px;top:11.93px;letter-spacing:0.148px;">3 months ago</span><span class="t c lk" style="left:1452.26px;top:11.93px;font-weight:bold;letter-spacing:-0.151px;">Gal Haase</span><span class="t c lk2" style="left:1620.96px;top:11.93px;transform:scaleX(0.9792);">7 stocks</span></div>
<div class="row" style="top:434.50px"><span class="cb"></span><span class="t c lk" style="left:65.96px;top:11.93px;font-weight:bold;transform:scaleX(0.9596);">CL-16.0018</span><span class="t c lk" style="left:234.96px;top:11.93px;font-weight:bold;transform:scaleX(0.9623);">HCT116 L1 19</span><span class="t c" style="left:403.76px;top:11.93px;transform:scaleX(1.0284);">Human</span><span class="t c" style="left:576.66px;top:11.93px;transform:scaleX(0.8527);">CRC</span><span class="t c" style="left:809.86px;top:11.93px;transform:scaleX(0.9405);">RPMI2</span><span class="t c" style="left:1114.46px;top:11.93px;transform:scaleX(0.9797);">5 years ago</span><span class="t c" style="left:1283.16px;top:11.93px;letter-spacing:0.148px;">3 months ago</span><span class="t c lk" style="left:1452.26px;top:11.93px;font-weight:bold;letter-spacing:-0.151px;">Gal Haase</span><span class="t c lk2" style="left:1620.96px;top:11.93px;letter-spacing:-0.112px;">10 stocks</span></div>
<div class="row alt" style="top:477.95px"><span class="cb"></span><span class="t c lk" style="left:65.96px;top:11.93px;font-weight:bold;transform:scaleX(0.9596);">CL-16.0020</span><span class="t c lk" style="left:234.96px;top:11.93px;font-weight:bold;transform:scaleX(0.9256);">Ls L1 29</span><span class="t c" style="left:403.76px;top:11.93px;transform:scaleX(1.0284);">Human</span><span class="t c" style="left:576.66px;top:11.93px;transform:scaleX(0.8527);">CRC</span><span class="t c" style="left:809.86px;top:11.93px;transform:scaleX(0.9125);">RPMI+G418+FCS</span><span class="t c" style="left:1114.46px;top:11.93px;transform:scaleX(0.9797);">5 years ago</span><span class="t c" style="left:1283.16px;top:11.93px;letter-spacing:0.148px;">3 months ago</span><span class="t c lk" style="left:1452.26px;top:11.93px;font-weight:bold;letter-spacing:-0.151px;">Gal Haase</span><span class="t c lk2" style="left:1620.96px;top:11.93px;letter-spacing:-0.112px;">13 stocks</span></div>
<div class="row" style="top:521.40px"><span class="cb"></span><span class="t c" style="left:1283.16px;top:11.93px;letter-spacing:0.148px;">3 months ago</span><span class="t c lk" style="left:1452.26px;top:11.93px;font-weight:bold;letter-spacing:-0.151px;">Gal Haase</span><span class="t c lk2" style="left:1620.96px;top:11.93px;transform:scaleX(0.9792);">9 stocks</span></div><div class="vsep" style="left:56px;top:0;height:540px"></div><div class="vsep" style="left:225px;top:0;height:540px"></div><div class="vsep" style="left:393px;top:0;height:540px"></div><div class="vsep" style="left:567px;top:0;height:540px"></div><div class="vsep" style="left:800px;top:0;height:540px"></div><div class="vsep" style="left:1104px;top:0;height:540px"></div><div class="vsep" style="left:1273px;top:0;height:540px"></div><div class="vsep" style="left:1442px;top:0;height:540px"></div><div class="vsep" style="left:1611px;top:0;height:540px"></div>
  </div>
  <div id="vscroll"><div class="th"></div>
    <svg class="abs" style="left:6px;top:8px" width="9" height="6" viewBox="0 0 9 6"><path d="M0 6h9L4.500 0z" fill="#a3a3a3"/></svg>
    <svg class="abs" style="left:6px;top:523.500px" width="9" height="5.500" viewBox="0 0 9 6"><path d="M0 0h9L4.500 6z" fill="#505050"/></svg>
  </div>
  <div id="hscroll"><div class="th"></div>
    <svg class="abs" style="left:8px;top:6px" width="6" height="9" viewBox="0 0 6 9"><path d="M6 0v9L0 4.500z" fill="#a3a3a3"/></svg>
    <svg class="abs" style="left:1697px;top:6px" width="6" height="9" viewBox="0 0 6 9"><path d="M0 0v9L6 4.500z" fill="#505050"/></svg>
  </div>
  <div id="corner"></div>
  <div id="pager">
    <div class="pb" style="left:4px"><svg width="30" height="30" viewBox="0 0 30 30"><path d="M11.800 11v8" stroke="#b8b8b8" stroke-width="1.600"/><path d="M18.800 11v8L13.300 15z" fill="#b8b8b8"/></svg></div>
    <div class="pb" style="left:38px"><svg width="30" height="30" viewBox="0 0 30 30"><path d="M17.500 11v8L12 15z" fill="#b5b5b5"/></svg></div>
    <div id="p1">1</div><span class="t c44" style="left:117.05px;top:10.46px;font-size:15.4px;transform:scaleX(1.0242);">2</span>
    <div class="pb on" style="left:140px"><svg width="30" height="30" viewBox="0 0 30 30"><path d="M12.500 11v8L18 15z" fill="#222"/></svg></div>
    <div class="pb on" style="left:174px"><svg width="30" height="30" viewBox="0 0 30 30"><path d="M19 10.500v9" stroke="#222" stroke-width="1.600"/><path d="M11.500 10.500v9L17.500 15z" fill="#222"/></svg></div>
    <div id="psel"><span class="t" style="left:8.95px;top:3.96px;font-size:15.4px;letter-spacing:-0.055px;">20</span><svg width="9" height="6" viewBox="0 0 9 6"><path d="M0 0h9L4.500 6z" fill="#444"/></svg></div>
    <span class="t" style="left:305.85px;top:10.16px;font-size:15.4px;letter-spacing:0.027px;">items per page</span>
    <span class="t" style="left:1558.05px;top:9.96px;font-size:15.4px;letter-spacing:-0.109px;">1 - 20 of 37 items</span>
    <svg class="abs" style="left:1702px;top:9px" width="20" height="22" viewBox="0 0 20 22"><path d="M15.800 8.200A7 7 0 1 0 16.800 13" fill="none" stroke="#222" stroke-width="2"/><path d="M11.500 1.500L18 5L12.500 9.500Z" fill="#222"/></svg>
  </div>
</div>
<div id="halo"></div>
<div id="chat"><svg class="abs" style="left:0;top:0" width="69" height="69" viewBox="0 0 69 69"><path d="M18.500 20Q18.500 16 22.500 16H46.500Q50.500 16 50.500 20V51.500L42.500 48.200H22.500Q18.500 48.200 18.500 44.200Z" fill="#fff"/><path d="M24 39.500Q34.500 46 45 39.500" fill="none" stroke="#9a3ab8" stroke-width="2" stroke-linecap="round"/></svg></div>
<div id="badge">2</div>
</body></html>
